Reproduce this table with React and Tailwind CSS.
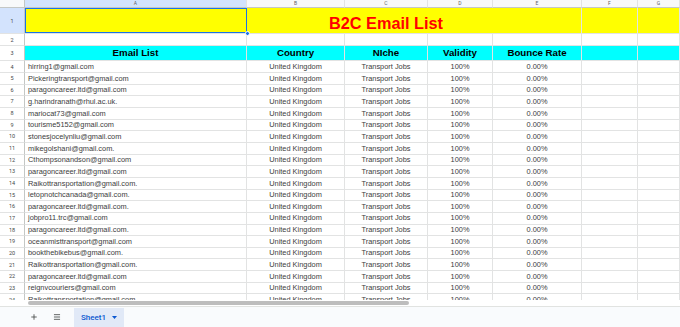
import { Plus, Menu } from 'lucide-react';

const cols = 'grid grid-cols-[25px_222px_98px_83px_65px_89px_56px_42px]';
const letters = ['A', 'B', 'C', 'D', 'E', 'F', 'G'];

const emails = [
    'hirring1@gmail.com',
    'Pickeringtransport@gmail.com',
    'paragoncareer.ltd@gmail.com',
    'g.harindranath@rhul.ac.uk.',
    'mariocat73@gmail.com',
    'tourisme5152@gmail.com',
    'stonesjocelynliu@gmail.com',
    'mikegolshani@gmail.com.',
    'Cthompsonandson@gmail.com',
    'paragoncareer.ltd@gmail.com',
    'Raikottransportation@gmail.com.',
    'letopnotchcanada@gmail.com.',
    'paragoncareer.ltd@gmail.com.',
    'jobpro11.trc@gmail.com',
    'paragoncareer.ltd@gmail.com.',
    'oceanmisttransport@gmail.com',
    'bookthebikebus@gmail.com.',
    'Raikottransportation@gmail.com.',
    'paragoncareer.ltd@gmail.com',
    'reignvcouriers@gmail.com',
    'Raikottransportation@gmail.com',
];

const rowNum = 'flex items-center justify-center border-r border-b border-r-[#c4c7c5] border-b-[#e2e3e3] text-[5.5px] text-[#444746] font-["Roboto",sans-serif]';
const cell = 'border-r border-b border-[#e2e3e3]';
const dataText = 'flex items-center justify-center leading-none text-[7.4px] text-[#3c3c3c]';

function DataRow({ n, email }) {
    return (
        <div className={`${cols} h-[11.67px]`}>
            <div className={rowNum}>{n}</div>
            <div className={`${cell} flex items-center pl-[3px] leading-none text-[7.4px] text-[#3c3c3c] whitespace-nowrap overflow-hidden`}>
                {email}
            </div>
            <div className={`${cell} ${dataText}`}>United Kingdom</div>
            <div className={`${cell} ${dataText}`}>Transport Jobs</div>
            <div className={`${cell} ${dataText}`}>100%</div>
            <div className={`${cell} ${dataText}`}>0.00%</div>
            <div className={cell}></div>
            <div className={cell}></div>
        </div>
    );
}

export default function App() {
    return (
        <div className="w-[680px] h-[327px] flex flex-col bg-white overflow-hidden font-['Liberation_Sans',Arial,sans-serif]">
            {/* Grid */}
            <div className="flex-1 overflow-hidden">
                {/* Column letters */}
                <div className={`${cols} h-[8.33px] bg-[#f8f9fa]`}>
                    <div className="border-r border-b border-[#c4c7c5]"></div>
                    {letters.map((l, i) => (
                        <div
                            key={l}
                            className={`flex items-center justify-center border-r border-b border-r-[#e2e3e3] border-b-[#c4c7c5] text-[5px] leading-none text-[#5f6368] font-["Roboto",sans-serif] ${i === 0 ? 'bg-[#d3e3fd]' : ''}`}
                        >
                            {l}
                        </div>
                    ))}
                </div>

                {/* Row 1: title */}
                <div className={`${cols} h-[26px]`}>
                    <div className={`${rowNum} bg-[#d3e3fd]`}>1</div>
                    <div className="relative bg-[#ffff00] border-b border-[#e2e3e3]">
                        <div className="absolute inset-0 border border-[#1a73e8]"></div>
                        <div className="absolute right-[-2.5px] bottom-[-2.5px] w-[5px] h-[5px] rounded-full bg-[#1a73e8] border border-white z-10"></div>
                    </div>
                    <div className="col-span-4 flex items-end justify-center pr-[56px] pb-[2px] bg-[#ffff00] border-r border-b border-[#e2e3e3] text-[16.3px] leading-none font-bold text-[#ff0000] whitespace-nowrap">
                        B2C Email List
                    </div>
                    <div className={`${cell} bg-[#ffff00]`}></div>
                    <div className={`${cell} bg-[#ffff00]`}></div>
                </div>

                {/* Row 2 */}
                <div className={`${cols} h-[11.67px]`}>
                    <div className={rowNum}>2</div>
                    {letters.map((l) => (
                        <div key={l} className={cell}></div>
                    ))}
                </div>

                {/* Row 3: headers */}
                <div className={`${cols} h-[15.33px]`}>
                    <div className={rowNum}>3</div>
                    {['Email List', 'Country', 'NIche', 'Validity', 'Bounce Rate', '', ''].map((h, i) => (
                        <div
                            key={i}
                            className={`${cell} bg-[#00ffff] flex items-center justify-center text-[9.7px] leading-none font-bold text-black whitespace-nowrap`}
                        >
                            {h}
                        </div>
                    ))}
                </div>

                {emails.map((email, i) => (
                    <DataRow key={i} n={i + 4} email={email} />
                ))}
            </div>

            {/* Horizontal scrollbar */}
            <div className="h-[7px] bg-white border-b border-[#e1e3e1]">
                <div className="ml-[28px] mt-[1px] w-[381px] h-[4px] rounded-full bg-[#bdbdbd]"></div>
            </div>

            {/* Sheet tabs */}
            <div className="h-[20px] bg-[#f9fbfd] flex items-stretch">
                <div className="w-[68px] flex items-center">
                    <Plus className="ml-[30px] w-[8px] h-[8px] text-[#444746]" strokeWidth={2.5} />
                    <Menu className="ml-[15px] w-[8px] h-[8px] text-[#444746]" strokeWidth={2.5} />
                </div>
                <div className="ml-[6px] mt-[1px] w-[50px] bg-[#e1e9f7] flex items-center pl-[7px] gap-[4px] text-[#0b57d0] font-['Roboto',sans-serif] font-medium text-[8px] leading-none">
                    <span>Sheet1</span>
                    <svg width="5" height="3" viewBox="0 0 5 3" className="ml-[2px]">
                        <path d="M0 0 L5 0 L2.5 3 Z" fill="#0b57d0" />
                    </svg>
                </div>
            </div>
        </div>
    );
}
